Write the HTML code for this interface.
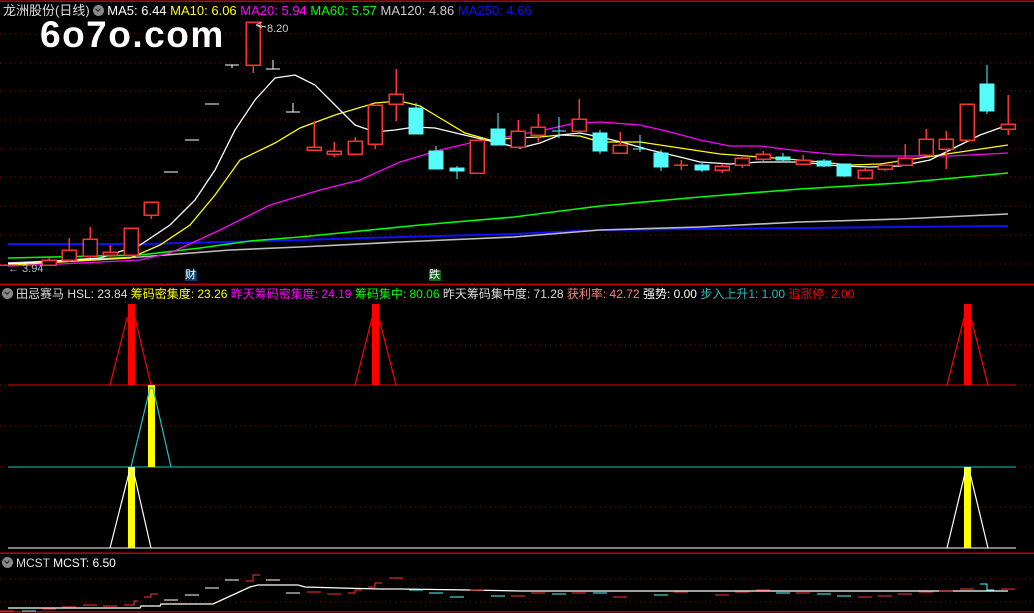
<!DOCTYPE html>
<html><head><meta charset="utf-8"><style>
html,body{margin:0;padding:0;background:#000;width:1034px;height:613px;overflow:hidden}
.t{position:absolute;font-family:"Liberation Sans","Noto Sans CJK SC",sans-serif;font-size:12px;white-space:nowrap;line-height:14px}
.ic{display:inline-block;width:11px;height:11px;border-radius:50%;background:#888;vertical-align:-1px;margin-right:3px;position:relative}
.ic:after{content:"";position:absolute;left:3px;top:2px;width:3px;height:3px;border-right:1.5px solid #222;border-bottom:1.5px solid #222;transform:rotate(45deg)}
svg rect,svg line,svg path{shape-rendering:crispEdges}
</style></head><body>
<svg width="1034" height="613" style="position:absolute;left:0;top:0" xmlns="http://www.w3.org/2000/svg">
<g stroke="#900000" stroke-dasharray="1 4" stroke-width="1">
<line x1="0" y1="34" x2="1034" y2="34"/><line x1="0" y1="63" x2="1034" y2="63"/><line x1="0" y1="91" x2="1034" y2="91"/><line x1="0" y1="120" x2="1034" y2="120"/><line x1="0" y1="149" x2="1034" y2="149"/><line x1="0" y1="177" x2="1034" y2="177"/><line x1="0" y1="206" x2="1034" y2="206"/><line x1="0" y1="235" x2="1034" y2="235"/><line x1="0" y1="264" x2="1034" y2="264"/>
<line x1="0" y1="345" x2="1034" y2="345"/><line x1="0" y1="385" x2="1034" y2="385"/><line x1="0" y1="426" x2="1034" y2="426"/><line x1="0" y1="467" x2="1034" y2="467"/><line x1="0" y1="507" x2="1034" y2="507"/>
<line x1="0" y1="579" x2="1034" y2="579"/><line x1="0" y1="602" x2="1034" y2="602"/>
</g>
<g stroke="#c00000" stroke-width="1.5"><line x1="0" y1="1" x2="1034" y2="1"/><line x1="0" y1="284" x2="1034" y2="284"/><line x1="0" y1="553" x2="1034" y2="553"/><line x1="0" y1="611.5" x2="1034" y2="611.5"/></g>
<g fill="none" stroke-width="1.3">
<polyline stroke="#1010ff" stroke-width="2" points="8,244 140,244 225,242 300,240 400,237 514,234 600,230 700,229 800,228 900,227 1008,226"/>
<polyline stroke="#c0c0c0" stroke-width="1.6" points="8,263 140,257 230,250 300,247 400,242 514,237 600,230 700,227 800,222 900,219 1008,214"/>
<polyline stroke="#00ff00" stroke-width="1.6" points="8,258 140,255 200,248 250,241 300,237 350,232 420,225 514,217 600,206 700,197 800,189 900,183 1008,173"/>
<polyline stroke="#ff00ff" points="8,266 60,264 140,260 170,253 220,230 270,205 320,190 360,180 400,162 440,150 470,143 500,138 540,131 575,123 600,122 640,125 670,132 700,140 730,146 760,146 800,151 830,154 870,156 900,156 950,156 1008,153"/>
<polyline stroke="#ffff00" points="8,265 130,258 160,245 190,225 215,195 240,160 275,143 300,128 335,115 375,103 400,101 420,106 440,118 465,133 490,140 515,138 540,137 560,135 580,136 600,142 640,142 680,148 720,154 760,157 800,160 850,165 880,164 920,158 960,152 1008,145"/>
<polyline stroke="#ffffff" points="8,264 100,258 140,245 170,225 195,200 215,170 235,130 255,100 275,78 295,75 315,85 335,105 355,125 375,132 395,130 415,127 435,128 460,134 490,141 520,148 540,143 560,135 580,133 600,137 625,143 650,150 680,157 700,162 730,164 760,162 800,162 840,166 870,167 900,166 930,160 960,145 980,135 1008,125"/>
</g>
<g stroke="#ff3232" stroke-width="1.5" fill="#000">
<line x1="49" y1="258" x2="49" y2="266"/><rect x="42" y="260" width="14" height="5"/>
<line x1="69" y1="238" x2="69" y2="262"/><rect x="62" y="250" width="14" height="10"/>
<line x1="90" y1="227" x2="90" y2="258"/><rect x="83" y="239" width="14" height="17"/>
<line x1="110" y1="245" x2="110" y2="257"/><rect x="103" y="252" width="14" height="3"/>
<rect x="124" y="228" width="14" height="27"/>
<line x1="151" y1="215" x2="151" y2="219"/><rect x="144" y="202" width="14" height="13"/>
<line x1="253" y1="65" x2="253" y2="73"/><rect x="246" y="22" width="14" height="43"/>
<line x1="314" y1="121" x2="314" y2="147"/><rect x="307" y="147" width="14" height="3"/>
<line x1="334" y1="142" x2="334" y2="157"/><rect x="327" y="151" width="14" height="3"/>
<line x1="355" y1="137" x2="355" y2="141"/><rect x="348" y="141" width="14" height="13"/>
<line x1="375" y1="144" x2="375" y2="149"/><rect x="368" y="105" width="14" height="39"/>
<line x1="396" y1="69" x2="396" y2="121"/><rect x="389" y="94" width="14" height="10"/>
<rect x="470" y="140" width="14" height="33"/>
<line x1="518" y1="120" x2="518" y2="131"/><rect x="511" y="131" width="14" height="16"/>
<line x1="538" y1="114" x2="538" y2="142"/><rect x="531" y="127" width="14" height="8"/>
<line x1="579" y1="99" x2="579" y2="119"/><rect x="572" y="119" width="14" height="12"/>
<line x1="620" y1="132" x2="620" y2="145"/><rect x="613" y="145" width="14" height="8"/>
<line x1="681" y1="160" x2="681" y2="170"/><line x1="674" y1="165" x2="688" y2="165"/>
<line x1="722" y1="164" x2="722" y2="173"/><rect x="715" y="166" width="14" height="4"/>
<line x1="742" y1="157" x2="742" y2="168"/><rect x="735" y="158" width="14" height="7"/>
<line x1="763" y1="151" x2="763" y2="161"/><rect x="756" y="154" width="14" height="5"/>
<line x1="803" y1="155" x2="803" y2="160"/><rect x="796" y="160" width="14" height="4"/>
<line x1="865" y1="167" x2="865" y2="170"/><rect x="858" y="170" width="14" height="8"/>
<line x1="885" y1="169" x2="885" y2="171"/><rect x="878" y="165" width="14" height="4"/>
<line x1="905" y1="144" x2="905" y2="158"/><rect x="898" y="158" width="14" height="7"/>
<line x1="926" y1="129" x2="926" y2="139"/><rect x="919" y="139" width="14" height="16"/>
<line x1="946" y1="131" x2="946" y2="169"/><rect x="939" y="139" width="14" height="10"/>
<rect x="960" y="104" width="14" height="36"/>
<line x1="1008" y1="95" x2="1008" y2="135"/><rect x="1001" y="124" width="14" height="5"/>
</g>
<g stroke="#54fcfc" fill="#54fcfc" stroke-width="1.2">
<line x1="416" y1="103" x2="416" y2="108"/><rect x="409" y="108" width="14" height="26"/>
<line x1="436" y1="146" x2="436" y2="151"/><rect x="429" y="151" width="14" height="18"/>
<line x1="457" y1="166" x2="457" y2="179"/><rect x="450" y="168" width="14" height="3"/>
<line x1="498" y1="113" x2="498" y2="129"/><rect x="491" y="129" width="14" height="16"/>
<line x1="559" y1="117" x2="559" y2="138"/><line x1="552" y1="131" x2="566" y2="131"/>
<line x1="600" y1="130" x2="600" y2="154"/><rect x="593" y="133" width="14" height="18"/>
<line x1="640" y1="135" x2="640" y2="152"/><line x1="633" y1="149" x2="647" y2="149"/>
<line x1="661" y1="150" x2="661" y2="171"/><rect x="654" y="153" width="14" height="14"/>
<line x1="702" y1="162" x2="702" y2="172"/><rect x="695" y="165" width="14" height="5"/>
<line x1="783" y1="153" x2="783" y2="161"/><rect x="776" y="157" width="14" height="3"/>
<line x1="824" y1="159" x2="824" y2="167"/><rect x="817" y="161" width="14" height="5"/>
<line x1="844" y1="164" x2="844" y2="177"/><rect x="837" y="164" width="14" height="12"/>
<line x1="987" y1="65" x2="987" y2="114"/><rect x="980" y="84" width="14" height="27"/>
</g>
<g stroke="#fff" stroke-width="1.3">
<line x1="8" y1="263" x2="22" y2="263"/>
<line x1="164" y1="172" x2="178" y2="172"/><line x1="185" y1="140" x2="199" y2="140"/><line x1="205" y1="104" x2="219" y2="104"/>
<line x1="225" y1="65" x2="239" y2="65"/><line x1="232" y1="65" x2="232" y2="68"/>
<line x1="266" y1="69" x2="280" y2="69"/><line x1="273" y1="60" x2="273" y2="69"/>
<line x1="286" y1="112" x2="300" y2="112"/><line x1="293" y1="103" x2="293" y2="112"/>
</g>
<line x1="0" y1="265" x2="18" y2="265" stroke="#ff3232" stroke-width="1.5"/>
<path d="M256 25 L262 22 M256 25 L262 28 M256 25 L266 27" stroke="#ccc" fill="none"/>
<rect x="185" y="270" width="12" height="11" fill="#0a3a6a"/><rect x="429" y="270" width="12" height="11" fill="#0a6a1a"/>
<line x1="8" y1="385" x2="1016" y2="385" stroke="#f00000" stroke-width="1.3"/>
<line x1="8" y1="467" x2="1016" y2="467" stroke="#20c0c0" stroke-width="1.3"/>
<line x1="8" y1="548" x2="1016" y2="548" stroke="#fff" stroke-width="1.3"/>
<g fill="#ff0000"><rect x="128" y="304" width="7" height="81"/><rect x="372" y="304" width="7" height="81"/><rect x="964" y="304" width="7" height="81"/></g>
<g fill="#ffff00"><rect x="148" y="385" width="7" height="82"/><rect x="128" y="467" width="7" height="81"/><rect x="964" y="467" width="7" height="81"/></g>
<g fill="none" stroke-width="1.2">
<polyline stroke="#f00" points="110,385 127,318 135,318 151,385"/><polyline stroke="#f00" points="355,385 372,318 379,318 396,385"/><polyline stroke="#f00" points="947,385 964,318 971,318 988,385"/>
<polyline stroke="#20c0c0" points="131,467 150,388 153,388 171,467"/>
<polyline stroke="#fff" points="110,548 130,469 133,469 151,548"/><polyline stroke="#fff" points="947,548 966,469 969,469 988,548"/>
</g>
<polyline fill="none" stroke="#fff" stroke-width="1.3" points="8,608 140,608 141,606 160,606 161,604 213,604 250,587 258,585 298,585 305,587 340,588 380,589 400,589 470,590 520,591 1008,591"/>
<g stroke="#ff3232" stroke-width="1.3" fill="none">
<path d="M0 611 H14 M42 609 H56 M62 607 H76 M83 605 H97 M103 606 H117 M124 605 H134 V601 H138 M144 597 H151 V594 H158 M246 581 H253 V575 H260 M307 592 H321 M327 594 H341 M348 593 H355 V590 H362 M368 587 H375 V583 H382 M389 578 H403 M470 590 H484 M511 596 H525 M531 593 H545 M572 593 H586 M613 597 H627 M674 592 H688 M715 595 H729 M735 592 H749 M756 590 H770 M796 593 H810 M858 597 H872 M878 596 H892 M898 594 H912 M919 592 H933 M939 591 H953 M960 589 H974 M1001 589 H1015"/>
</g>
<g stroke="#54fcfc" stroke-width="1.3" fill="none"><path d="M22 611 H36 M409 590 H423 M429 593 H443 M450 597 H464 M491 596 H505 M552 594 H566 M593 593 H607 M654 595 H668 M776 593 H790 M817 594 H831 M837 596 H851 M980 584 H987 V590 H994"/></g>
<g stroke="#fff" stroke-width="1.3"><path d="M164 600 H178 M185 595 H199 M205 588 H219 M225 580 H239 M266 580 H280 M286 593 H300"/></g>
</svg>
<div class="t" style="left:3px;top:4px;color:#ddd;font-size:13px">龙洲股份(日线) <span class="ic"></span><span style="color:#fff">MA5: 6.44</span> <span style="color:#ff0">MA10: 6.06</span> <span style="color:#f0f">MA20: 5.94</span> <span style="color:#0f0">MA60: 5.57</span> <span style="color:#ccc">MA120: 4.86</span> <span style="color:#1010ff">MA250: 4.66</span></div>
<div class="t" style="left:40px;top:14px;color:#fff;font-size:37px;line-height:42px;font-weight:bold;letter-spacing:1.5px">6o7o.com</div>
<div class="t" style="left:267px;top:22px;color:#ccc;font-size:11px">8.20</div>
<div class="t" style="left:8px;top:262px;color:#bbb;font-size:11px">← 3.94</div>
<div class="t" style="left:185px;top:268px;color:#fff;font-size:11px">财</div>
<div class="t" style="left:429px;top:268px;color:#fff;font-size:11px">跌</div>
<div class="t" style="left:2px;top:287px;color:#ddd"><span class="ic"></span>田忌赛马 HSL: 23.84 <span style="color:#ff0">筹码密集度: 23.26</span> <span style="color:#f0f">昨天筹码密集度: 24.19</span> <span style="color:#0f0">筹码集中: 80.06</span> 昨天筹码集中度: 71.28 <span style="color:#ff8080">获利率: 42.72</span> <span style="color:#fff">强势: 0.00</span> <span style="color:#20c0c0">步入上升1: 1.00</span> <span style="color:#f00">追涨停: 2.00</span></div>
<div class="t" style="left:2px;top:556px;color:#ddd"><span class="ic"></span>MCST <span style="color:#fff">MCST: 6.50</span></div>
</body></html>
